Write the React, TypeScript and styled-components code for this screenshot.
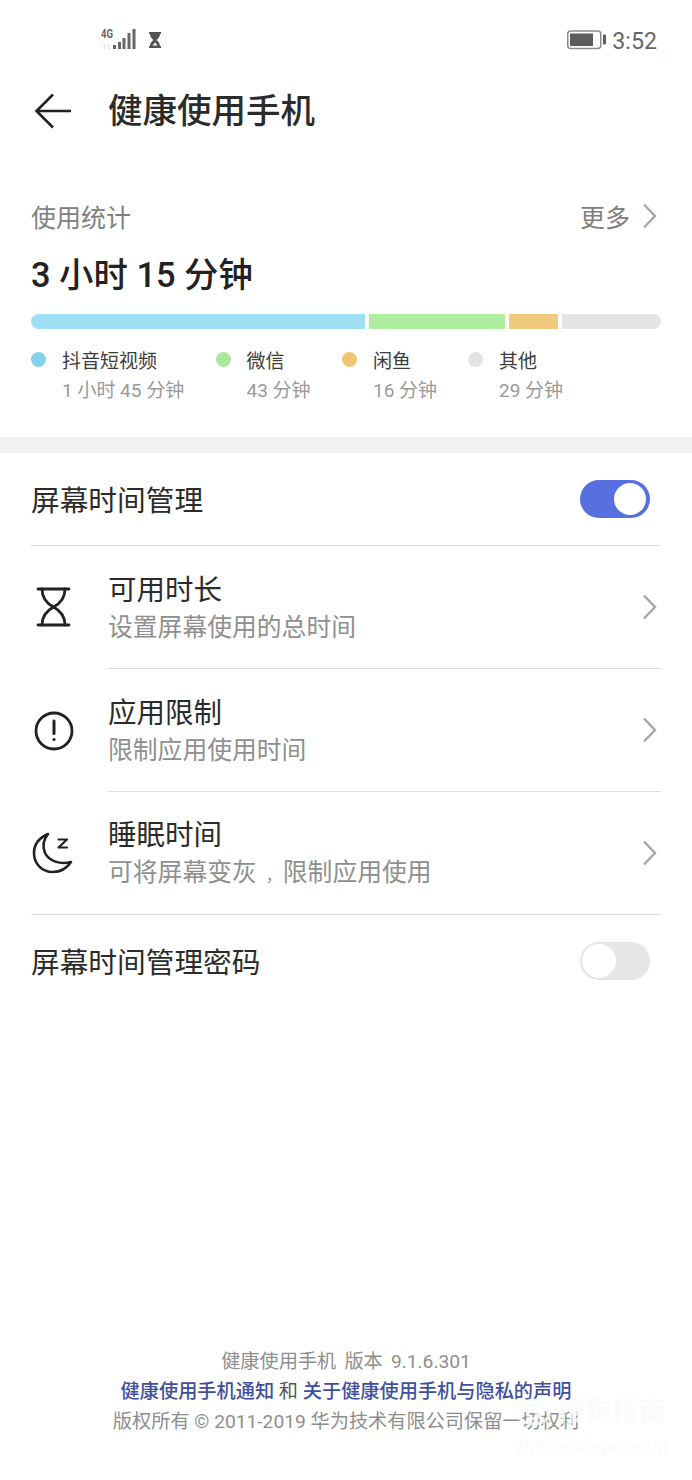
import React from 'react';
import styled, { createGlobalStyle } from 'styled-components';

const Global = createGlobalStyle`
  html, body { margin: 0; padding: 0; background: #fff; }
  body { font-family: Roboto, "Noto Sans CJK SC", sans-serif; }
  * { box-sizing: border-box; }
`;

const Page = styled.div`
  position: relative;
  width: 692px;
  height: 1480px;
  display: flex;
  flex-direction: column;
  background: #fff;
  overflow: hidden;
`;

const StatusBar = styled.div`
  height: 80px;
  display: flex;
  align-items: center;
  justify-content: space-between;
  padding: 0 35px 0 100px;
`;
const StatusGroup = styled.div`
  display: flex;
  align-items: center;
  gap: ${p => p.$gap}px;
`;
const Clock = styled.span`
  font-size: 23.2px;
  line-height: 28px;
  padding-top: 2px;
  color: #666;
`;

const Header = styled.div`
  height: 62px;
  display: flex;
  align-items: center;
  padding-left: 34px;
  gap: 36px;
`;
const Title = styled.h1`
  margin: 0;
  font-size: 34.5px;
  font-weight: 500;
  color: #2b2b2b;
  line-height: 1;
`;

const Usage = styled.section`
  height: 295px;
  padding: 56px 31px 0;
  display: flex;
  flex-direction: column;
`;
const UsageHead = styled.div`
  display: flex;
  justify-content: space-between;
  align-items: center;
  height: 36px;
  padding-right: 3px;
`;
const Muted = styled.span`
  font-size: 25px;
  color: #808080;
`;
const MoreLink = styled.div`
  display: flex;
  align-items: center;
  gap: 10px;
`;
const Total = styled.div`
  margin-top: 21px;
  height: 40px;
  line-height: 40px;
  font-size: 34.4px;
  font-weight: 500;
  color: #222;
`;
const Bar = styled.div`
  margin-top: 19px;
  height: 15px;
  display: flex;
  gap: 4px;
  border-radius: 8px;
  overflow: hidden;
`;
const Segment = styled.div`
  background: ${p => p.$color};
`;
const Legend = styled.div`
  display: flex;
  margin-top: 15px;
`;
const LegendItem = styled.div`
  width: ${p => p.$w}px;
  display: grid;
  grid-template-columns: 31px 1fr;
  grid-template-rows: 30px 28px;
  align-items: center;
`;
const Dot = styled.span`
  width: 15px;
  height: 15px;
  border-radius: 50%;
  background: ${p => p.$color};
`;
const LegendName = styled.span`
  font-size: 19px;
  color: #3c3c3c;
  white-space: nowrap;
`;
const LegendTime = styled.span`
  grid-column: 2;
  font-size: 19px;
  color: #9a9a9a;
  white-space: nowrap;
`;

const Gap = styled.div`
  height: 16px;
  background: #f1f1f1;
`;

const List = styled.section`
  padding: 0 31px;
`;
const SwitchRow = styled.div`
  height: ${p => p.$h}px;
  display: flex;
  align-items: center;
  justify-content: space-between;
  padding-right: 11px;
  border-bottom: ${p => (p.$line ? '1px solid #d9d9d9' : 'none')};
`;
const RowLabel = styled.span`
  font-size: 28.7px;
  line-height: 40px;
  margin-top: 4px;
  color: #2b2b2b;
`;
const Toggle = styled.div`
  width: 70px;
  height: 38px;
  border-radius: 19px;
  background: ${p => (p.$on ? '#586fdf' : '#e6e6e6')};
  display: flex;
  align-items: center;
  justify-content: ${p => (p.$on ? 'flex-end' : 'flex-start')};
  padding: 0 ${p => (p.$on ? 4 : 2)}px;
`;
const Knob = styled.span`
  width: ${p => (p.$on ? 32 : 34)}px;
  height: ${p => (p.$on ? 32 : 34)}px;
  border-radius: 50%;
  background: #fff;
`;
const NavRow = styled.div`
  display: flex;
  align-items: stretch;
  height: 123px;
  border-bottom: ${p => (p.$closing ? '1px solid #d9d9d9' : 'none')};
`;
const IconCell = styled.div`
  width: 77px;
  display: flex;
  align-items: center;
`;
const NavBody = styled.div`
  flex: 1;
  display: flex;
  align-items: center;
  justify-content: space-between;
  padding-right: 3px;
  border-bottom: ${p => (p.$closing ? 'none' : '1px solid #dedede')};
`;
const NavText = styled.div`
  display: flex;
  flex-direction: column;
  gap: 1px;
  padding-top: 5px;
`;
const NavTitle = styled.span`
  font-size: 28.5px;
  line-height: 36px;
  color: #2b2b2b;
`;
const NavSub = styled.span`
  font-size: 24.8px;
  line-height: 36px;
  color: #8f8f8f;
`;
const Comma = styled.span`
  font-size: 16px;
  padding: 0 1px 0 9px;
`;

const Footer = styled.footer`
  margin-top: auto;
  padding-bottom: 43px;
  display: flex;
  flex-direction: column;
  align-items: center;
  font-size: 19.2px;
  line-height: 30px;
  color: #8e8e8e;
`;
const FooterLine = styled.div`
  white-space: pre;
  word-spacing: ${p => (p.$tight ? '-0.7px' : '0')};
  color: ${p => (p.$dark ? '#555' : '#8e8e8e')};
`;
const FooterLink = styled.span`
  color: #3f4f9e;
  font-weight: 500;
`;
const Watermark = styled.div`
  position: absolute;
  left: 515px;
  top: 1396px;
  display: flex;
  align-items: center;
  gap: 6px;
  font-size: 27px;
  line-height: 32px;
  font-weight: 700;
  color: rgba(250, 250, 250, 0.8);
  white-space: nowrap;
`;
const WatermarkUrl = styled.div`
  position: absolute;
  left: 515px;
  top: 1436px;
  font-size: 17.5px;
  line-height: 22px;
  font-weight: 700;
  letter-spacing: 0.5px;
  color: rgba(250, 250, 250, 0.85);
`;

const Chevron = () => (
  <svg width="18" height="28" viewBox="0 0 18 28" fill="none" stroke="#a6a6a6" strokeWidth="2.4" style={{ display: 'block' }}>
    <path d="M4 2.5 L15 14 L4 25.5" />
  </svg>
);

const segments = [
  { color: '#a0e0f5', w: 334 },
  { color: '#aeeca0', w: 136 },
  { color: '#f0ca7d', w: 49 },
  { color: '#e4e4e4', w: 99 },
];
const legend = [
  { color: '#86d2ea', name: '抖音短视频', time: '1 小时 45 分钟', w: 184.5 },
  { color: '#a9e79c', name: '微信', time: '43 分钟', w: 126.5 },
  { color: '#f0c674', name: '闲鱼', time: '16 分钟', w: 126 },
  { color: '#e3e3e3', name: '其他', time: '29 分钟', w: 126 },
];

const HourglassIcon = () => (
  <svg width="46" height="46" viewBox="0 0 46 46" fill="none" stroke="#222" strokeWidth="2.8" strokeLinecap="round">
    <path d="M7 4 H38 M7 40 H38" />
    <path d="M11 4 C11 13 15 18 22.5 22 C30 26 34 31 34 40" />
    <path d="M34 4 C34 13 30 18 22.5 22 C15 26 11 31 11 40" />
  </svg>
);
const AlertIcon = () => (
  <svg width="46" height="46" viewBox="0 0 46 46" fill="none" stroke="#222" strokeWidth="2.8" strokeLinecap="round">
    <circle cx="23" cy="23" r="18" />
    <path d="M23 13 V25.5" strokeWidth="3" />
    <circle cx="23" cy="31.5" r="1.6" fill="#222" stroke="none" />
  </svg>
);
const MoonIcon = () => (
  <svg width="46" height="46" viewBox="0 0 46 46" fill="none" stroke="#222" strokeWidth="2.6" strokeLinejoin="round" strokeLinecap="round">
    <path d="M17 4 C8 8 3 15 3 23 C3 34 11 42 22 42 C30 42 36 38 40 32 C29 35 18 31 14 23 C11 16 13 9 17 4 Z" />
    <path d="M27.5 9.5 H36 L27.5 17.5 H36" strokeWidth="2.2" />
  </svg>
);

const Row = ({ icon, title, sub, closing }: { icon: React.ReactNode; title: string; sub: React.ReactNode; closing?: boolean }) => (
  <NavRow $closing={closing}>
    <IconCell>{icon}</IconCell>
    <NavBody $closing={closing}>
      <NavText>
        <NavTitle>{title}</NavTitle>
        <NavSub>{sub}</NavSub>
      </NavText>
      <Chevron />
    </NavBody>
  </NavRow>
);

export default function App() {
  return (
    <Page>
      <Global />
      <StatusBar>
        <StatusGroup $gap={11}>
          <svg width="37" height="26" viewBox="0 0 37 26" style={{ display: 'block' }}>
            <text x="1" y="11" fontSize="13" fontWeight="700" fontFamily="Roboto" textLength="12" lengthAdjust="spacingAndGlyphs" fill="#666">4G</text>
            <text x="2" y="22" fontSize="9" fontFamily="Roboto" fill="#c4c4c4">↑↓</text>
            <rect x="13" y="18" width="3" height="4" fill="#666" />
            <rect x="18" y="15" width="3" height="7" fill="#666" />
            <rect x="22.5" y="11" width="3" height="11" fill="#666" />
            <rect x="27.5" y="6" width="3" height="16" fill="#666" />
            <rect x="32.5" y="2" width="3" height="20" fill="#666" />
          </svg>
          <svg width="14" height="16" viewBox="0 0 14 16" style={{ display: 'block' }}>
            <path d="M1 0 H13 V2 H12 C12 5 10 7 8.5 8 C10 9 12 11 12 14 H13 V16 H1 V14 H2 C2 11 4 9 5.5 8 C4 7 2 5 2 2 H1 Z" fill="#555" />
            <path d="M4.5 13.5 L7 10.5 L9.5 13.5 Z" fill="#fff" />
          </svg>
        </StatusGroup>
        <StatusGroup $gap={6}>
          <svg width="39" height="20" viewBox="0 0 39 20" style={{ display: 'block' }}>
            <rect x="0.75" y="1" width="33" height="17.5" rx="3" fill="none" stroke="#8a8a8a" strokeWidth="1.5" />
            <rect x="3" y="3.5" width="23" height="12.5" fill="#5c5c5c" />
            <rect x="36" y="4.5" width="3" height="10" rx="1" fill="#5c5c5c" />
          </svg>
          <Clock>3:52</Clock>
        </StatusGroup>
      </StatusBar>

      <Header>
        <svg width="38" height="38" viewBox="0 0 38 38" fill="none" stroke="#222" strokeWidth="2.6" style={{ display: 'block' }}>
          <path d="M19 2.5 L2.5 19 L19 35.5 M2.5 19 H37" />
        </svg>
        <Title>健康使用手机</Title>
      </Header>

      <Usage>
        <UsageHead>
          <Muted>使用统计</Muted>
          <MoreLink>
            <Muted>更多</Muted>
            <Chevron />
          </MoreLink>
        </UsageHead>
        <Total>3 小时 15 分钟</Total>
        <Bar>
          {segments.map(s => (
            <Segment key={s.color} $color={s.color} style={{ width: s.w }} />
          ))}
        </Bar>
        <Legend>
          {legend.map(l => (
            <LegendItem key={l.name} $w={l.w}>
              <Dot $color={l.color} />
              <LegendName>{l.name}</LegendName>
              <LegendTime>{l.time}</LegendTime>
            </LegendItem>
          ))}
        </Legend>
      </Usage>

      <Gap />

      <List>
        <SwitchRow $h={93} $line>
          <RowLabel>屏幕时间管理</RowLabel>
          <Toggle $on><Knob $on /></Toggle>
        </SwitchRow>
        <Row icon={<HourglassIcon />} title="可用时长" sub="设置屏幕使用的总时间" />
        <Row icon={<AlertIcon />} title="应用限制" sub="限制应用使用时间" />
        <Row icon={<MoonIcon />} title="睡眠时间" sub={<>可将屏幕变灰<Comma>，</Comma>限制应用使用</>} closing />
        <SwitchRow $h={91}>
          <RowLabel>屏幕时间管理密码</RowLabel>
          <Toggle><Knob /></Toggle>
        </SwitchRow>
      </List>

      <Footer>
        <FooterLine $tight>健康使用手机  版本  9.1.6.301</FooterLine>
        <FooterLine $dark>
          <FooterLink>健康使用手机通知</FooterLink> 和 <FooterLink>关于健康使用手机与隐私的声明</FooterLink>
        </FooterLine>
        <FooterLine>版权所有 © 2011-2019 华为技术有限公司保留一切权利</FooterLine>
      </Footer>
      <Watermark>
        <svg width="37" height="28" viewBox="0 0 37 28" fill="none" stroke="rgba(250,250,250,0.85)" strokeWidth="3" style={{ display: 'block' }}>
          <ellipse cx="18.5" cy="14" rx="16" ry="12" />
          <path d="M24 9 C20 6 13 7 13 10.5 C13 14 24 13 24 17.5 C24 21 16 22 12 19" />
        </svg>
        搜狗指南
      </Watermark>
      <WatermarkUrl>zhinan.sogou.com</WatermarkUrl>
    </Page>
  );
}
